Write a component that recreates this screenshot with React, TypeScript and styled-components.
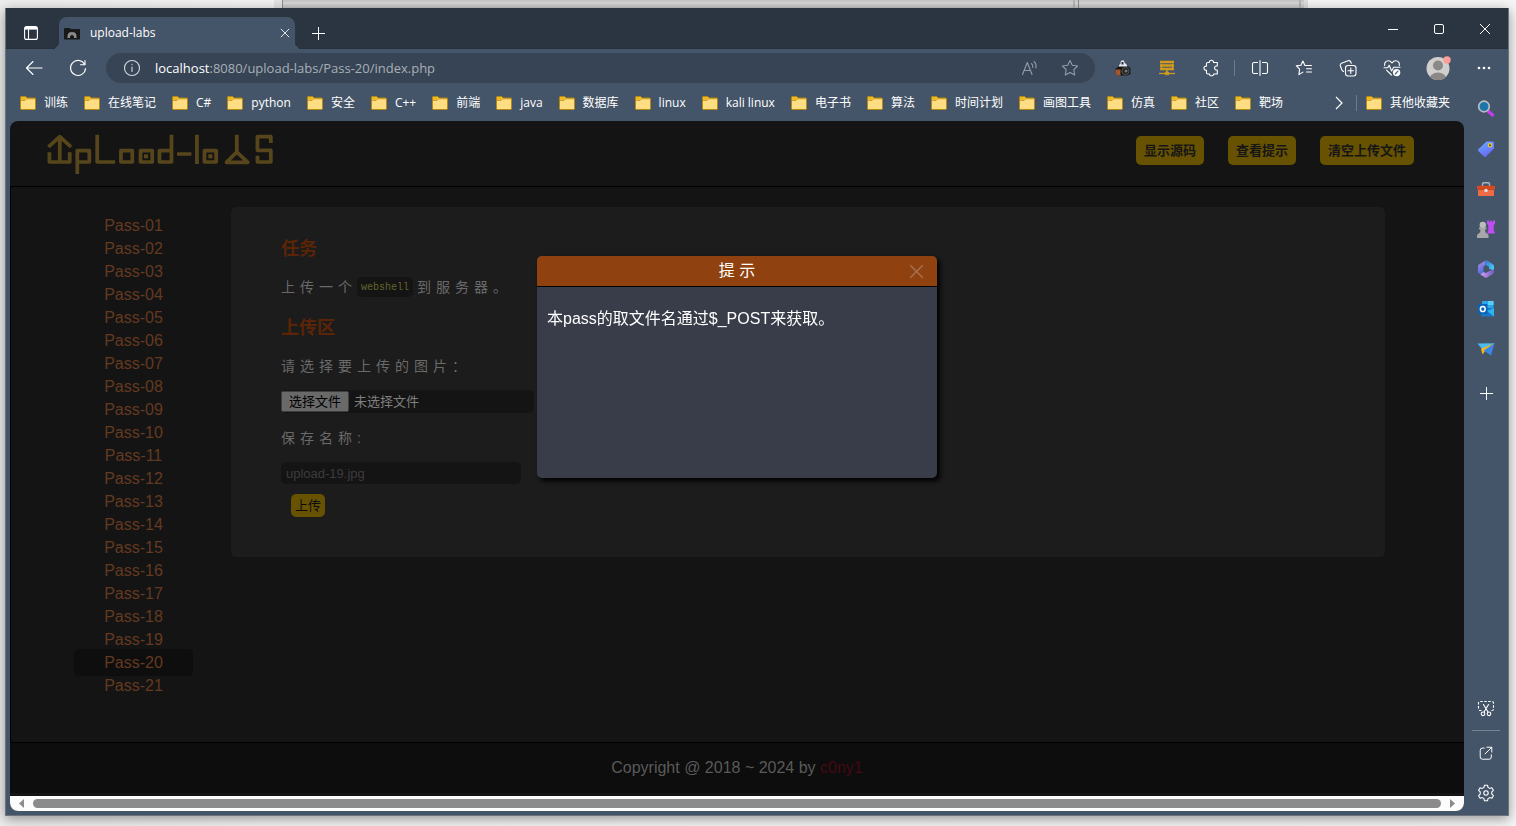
import React from 'react';
import styled, { createGlobalStyle, css } from 'styled-components';

const UI_FONT = '"Open Sans", "Noto Sans CJK SC", sans-serif';
const PAGE_FONT = '"Liberation Sans", "Noto Sans CJK SC", sans-serif';

const GlobalStyle = createGlobalStyle`
  *, *::before, *::after { box-sizing: border-box; }
  body { margin: 0; background: #f1f1f1; }
  button, input { font: inherit; }
  button { border: 0; padding: 0; margin: 0; background: none; color: inherit; cursor: pointer; }
  a { text-decoration: none; color: inherit; }
  ul { list-style: none; margin: 0; padding: 0; }
  svg { display: block; flex: none; }
`;

const Desktop = styled.div`
  min-height: 100vh;
  display: flex;
  flex-direction: column;
  background: linear-gradient(90deg, #ededed, #f4f4f4 280px, #f6f6f6);
`;

const BackWindow = styled.div`
  height: 8px;
  margin: 0 208px 0 274px;
  display: flex;
  background: linear-gradient(#cacaca 2px, #dcdcdc 2px, #c4c4c4);
  border-left: 8px solid #e4e4e4;
  border-right: 4px solid #dedede;
`;

const BackPane = styled.div<{ $grow: number }>`
  flex: ${(p) => p.$grow} 1 0;
  border-left: 1px solid #8c8c8c;
  border-right: 2px solid #b4b4b4;
  margin-right: 3px;
`;

const BrowserWindow = styled.div`
  flex: 1;
  display: flex;
  flex-direction: column;
  margin: 0 7px 10px 5px;
  border: 1px solid #6d737b;
  border-top: 0;
  background: #455569;
  box-shadow: 0 3px 12px rgba(0, 0, 0, 0.4);
  font-family: ${UI_FONT};
  font-size: 12px;
  color: #fff;
`;

const TitleBar = styled.div`
  height: 41px;
  display: flex;
  align-items: flex-end;
  background: #2b3541;
  box-shadow: inset 0 -1px 0 #27303b;
`;

const CaptionButton = styled.button<{ $width: number }>`
  width: ${(p) => p.$width}px;
  height: 32px;
  display: flex;
  align-items: center;
  justify-content: center;
`;

const WindowControls = styled.div`
  margin-left: auto;
  align-self: flex-start;
  display: flex;
  padding-top: 5px;
`;

const Tab = styled.div`
  position: relative;
  width: 236px;
  height: 32px;
  margin-left: 4px;
  padding: 0 5px;
  display: flex;
  align-items: center;
  gap: 10px;
  background: #455569;
  border-radius: 8px 8px 0 0;
  &::before,
  &::after {
    content: '';
    position: absolute;
    bottom: 0;
    width: 7px;
    height: 7px;
  }
  &::before {
    left: -7px;
    background: radial-gradient(circle at 0 0, transparent 7px, #455569 7px);
  }
  &::after {
    right: -7px;
    background: radial-gradient(circle at 100% 0, transparent 7px, #455569 7px);
  }
`;

const TabTitle = styled.span`
  flex: 1;
  line-height: 16px;
`;

const Toolbar = styled.div`
  height: 39px;
  display: flex;
  align-items: center;
  padding: 0 2px 2px 6px;
`;

const toolWidths = { narrow: 40, normal: 44, wide: 48 };

const ToolButton = styled.button<{ $size?: keyof typeof toolWidths }>`
  width: ${(p) => toolWidths[p.$size ?? 'normal']}px;
  height: 32px;
  display: flex;
  flex: none;
  align-items: center;
  justify-content: center;
`;

const AddressBar = styled.div`
  flex: 1;
  height: 30px;
  margin: 0 6px;
  padding: 0 5px 0 17px;
  display: flex;
  align-items: center;
  border-radius: 15px;
  background: #374455;
  color: #a9afb7;
  font-size: 13px;
`;

const Url = styled.span`
  flex: 1;
  padding-left: 14px;
  line-height: 20px;
  b {
    font-weight: 400;
    color: #fff;
  }
`;

const Divider = styled.span`
  width: 1px;
  height: 16px;
  margin: 0 3px 0 1px;
  background: #6f7b8a;
`;

const Lower = styled.div`
  flex: 1;
  display: flex;
`;

const ContentColumn = styled.div`
  flex: 1;
  min-width: 0;
  display: flex;
  flex-direction: column;
  padding: 0 0 4px 4px;
`;

const Bookmarks = styled.nav`
  height: 30px;
  margin-bottom: 3px;
  padding: 0 14px 0 10px;
  display: flex;
  align-items: center;
  gap: 16px;
  white-space: nowrap;
`;

const Bookmark = styled.a`
  display: flex;
  align-items: center;
  gap: 8px;
  line-height: 16px;
`;

const BookmarksEnd = styled.div`
  margin-left: auto;
  display: flex;
  align-items: center;
  gap: 6px;
`;

const Sidebar = styled.aside`
  width: 44px;
  padding: 1px 0 2px;
  display: flex;
  flex-direction: column;
  align-items: center;
`;

const SideButton = styled.button`
  width: 40px;
  height: 40px;
  display: flex;
  align-items: center;
  justify-content: center;
`;

const AddButton = styled(SideButton)`
  margin-top: 4px;
`;

const SideBottom = styled.div`
  margin-top: auto;
  display: flex;
  flex-direction: column;
  align-items: center;
`;

const SideRule = styled.hr`
  width: 28px;
  height: 1px;
  margin: 2px 0;
  border: 0;
  background: #77828f;
`;

const Page = styled.div`
  position: relative;
  flex: 1;
  display: flex;
  flex-direction: column;
  overflow: hidden;
  border-radius: 8px;
  background: #141414;
  font-family: ${PAGE_FONT};
  font-size: 16px;
`;

const PageHeader = styled.header`
  height: 66px;
  display: flex;
  align-items: flex-start;
  padding: 11px 50px 0 36px;
  border-bottom: 1px solid #000;
`;

const HeaderActions = styled.div`
  margin: 4px 0 0 auto;
  display: flex;
  gap: 24px;
`;

const goldButton = css`
  border-radius: 5px;
  background: #665200;
  font-size: 13px;
`;

const HeaderButton = styled.button`
  ${goldButton}
  height: 29px;
  padding: 0 8px 3px;
  color: #161616;
  font-weight: 700;
`;

const PageMain = styled.main`
  flex: 1;
  display: flex;
  align-items: flex-start;
  padding: 20px 79px 40px 0;
  border-left: 1px solid #000;
`;

const PassList = styled.ul`
  width: 220px;
  padding: 7px 0 0 25px;
  text-align: center;
  line-height: 23px;
  color: #643a20;
`;

const PassLink = styled.a<{ $active: boolean }>`
  padding: 5px 30px;
  border-radius: 5px;
  background: ${(p) => (p.$active ? '#0e0e0e' : 'transparent')};
`;

const Panel = styled.section`
  flex: 1;
  padding: 30px 50px 40px;
  border-radius: 5px;
  background: #1c1c1c;
`;

const PanelTitle = styled.h3`
  margin: 0 0 16px;
  font-size: 18px;
  line-height: 24px;
  color: #5c2406;
`;

const PanelText = styled.p`
  margin: 0 0 19px;
  font-size: 14px;
  line-height: 20px;
  letter-spacing: 5px;
  color: #6a6a6a;
`;

const Code = styled.code`
  display: inline-block;
  height: 20px;
  padding: 1px 4px 0;
  margin-right: 4px;
  border-radius: 5px;
  background: #141414;
  color: #66642a;
  font-family: "Liberation Mono", monospace;
  font-size: 10px;
  letter-spacing: 0;
  vertical-align: top;
`;

const FieldLabel = styled.label`
  display: block;
  margin-bottom: 14px;
  font-size: 14px;
  line-height: 20px;
  letter-spacing: 5px;
  color: #6a6a6a;
`;

const FilePicker = styled.label`
  position: relative;
  width: 253px;
  height: 23px;
  margin-bottom: 15px;
  display: flex;
  align-items: center;
  gap: 5px;
  border-radius: 5px;
  background: #141414;
  color: #7f7f7f;
  font-size: 13px;
  line-height: 19px;
  input {
    position: absolute;
    inset: 0;
    opacity: 0;
  }
`;

const FileButton = styled.span`
  padding: 0 7px;
  border: 1px solid #3f3f3f;
  border-radius: 2px;
  background: #696969;
  color: #000;
`;

const TextInput = styled.input`
  display: block;
  width: 240px;
  height: 22px;
  margin-bottom: 10px;
  padding: 0 5px;
  border: 0;
  border-radius: 5px;
  background: #141414;
  color: #7f7f7f;
  font-size: 13px;
  &::placeholder {
    color: #3c3c3c;
    opacity: 1;
  }
`;

const SubmitButton = styled.button`
  ${goldButton}
  height: 23px;
  margin-left: 10px;
  padding: 0 4px;
  display: block;
  line-height: 23px;
  color: #0c0c0c;
`;

const PageFooter = styled.footer`
  height: 54px;
  border-top: 1px solid #000;
  border-bottom: 3px solid #141414;
  background: #0d0d0d;
  text-align: center;
  line-height: 50px;
  color: #5a5a5a;
  a {
    color: #430a12;
  }
`;

const ScrollTrack = styled.div`
  height: 15px;
  padding: 0 8px;
  display: flex;
  align-items: center;
  gap: 8px;
  background: #fcfcfc;
`;

const ScrollThumb = styled.div`
  flex: 1;
  height: 9px;
  border-radius: 5px;
  background: #8b8b8b;
`;

const Dialog = styled.div`
  position: absolute;
  top: 135px;
  left: 50%;
  width: 400px;
  height: 222px;
  margin-left: -200px;
  border-radius: 5px;
  background: #393d49;
  box-shadow: 3px 3px 5px #000;
`;

const DialogHeader = styled.div`
  height: 31px;
  padding: 0 13px;
  display: grid;
  grid-template-columns: 15px 1fr 15px;
  align-items: center;
  border-bottom: 1px solid #000;
  border-radius: 5px 5px 0 0;
  background: #8f420f;
  text-align: center;
`;

const DialogTitle = styled.h2`
  grid-column: 2;
  margin: 0;
  font-size: 16px;
  line-height: 30px;
  font-weight: 400;
`;

const DialogText = styled.p`
  margin: 0;
  padding: 20px 10px;
  line-height: 23px;
`;

type IconProps = { size?: number; color?: string; children: React.ReactNode };
const Icon = ({ size = 18, color = '#fff', children }: IconProps) => (
  <svg width={size} height={size} viewBox="0 0 18 18" fill="none" stroke={color} strokeWidth="1.100" strokeLinecap="round" strokeLinejoin="round" aria-hidden="true">
    {children}
  </svg>
);

const Folder = () => (
  <svg width="16" height="14" viewBox="0 0 16 14" aria-hidden="true">
    <path d="M0.5 1.5Q0.5 0.5 1.5 0.5H5.5L7 2H14.5Q15.5 2 15.5 3V12.5Q15.5 13.5 14.5 13.5H1.5Q0.5 13.5 0.5 12.5Z" fill="#ffdd82" stroke="#b5890f" />
    <path d="M1 1H5.3L6.4 2.2L5 3.7H1Z" fill="#eeb81f" />
    <path d="M1 4.3H5.2L6.8 2.7H15" fill="none" stroke="#c3951c" />
  </svg>
);

const Logo = () => (
  <svg width="230" height="43" viewBox="132 36 669 129" preserveAspectRatio="none" fill="none" stroke="#57451c" strokeWidth="11" strokeLinejoin="round" role="img" aria-label="upload-labs">
    <path d="M142 97V126H201V97M172 50V126M139 81L172 50L205 81" />
    <path d="M223 162V92H258V126H223" />
    <path d="M281 44V126H333" />
    <rect x="350" y="92" width="33" height="34" />
    <rect x="407" y="92" width="34" height="34" />
    <rect x="417" y="103" width="12" height="12" fill="#57451c" stroke="none" />
    <path d="M497 44V126H462V92H497" />
    <path d="M513 102H555" />
    <path d="M571 44V132" />
    <rect x="593" y="92" width="34" height="34" />
    <rect x="604" y="103" width="12" height="12" fill="#57451c" stroke="none" />
    <path d="M687 44V96L657 127H719L687 96" />
    <path d="M786 69V50H747V91H786V126H747V107" />
  </svg>
);

const bookmarks = ['训练', '在线笔记', 'C#', 'python', '安全', 'C++', '前端', 'java', '数据库', 'linux', 'kali linux', '电子书', '算法', '时间计划', '画图工具', '仿真', '社区', '靶场'];
const passes = Array.from({ length: 21 }, (_, i) => `Pass-${String(i + 1).padStart(2, '0')}`);

const toolsBefore = [
  {
    label: '截图',
    icon: (
      <svg width="16" height="16" viewBox="0 0 16 16" aria-hidden="true">
        <path d="M4 7V5L5.500 4V2L6.500 0.500H9L9.500 2.500L12 5V7Z" fill="#e5eaf0" />
        <path d="M6.500 2H8.500V4.500H6.500Z" fill="#26303c" />
        <path d="M0.500 8.500L4 6.500H13.500L15.500 8.500V14L12.500 15.500H3L0.500 14Z" fill="#171717" />
        <path d="M0.500 9.500H5.500V15.500H2.500L0.500 14Z" fill="#a3562f" />
        <circle cx="10.500" cy="11" r="3.600" fill="#222" stroke="#666" strokeWidth="0.800" />
        <circle cx="11" cy="11" r="1.500" fill="#6f7785" />
      </svg>
    ),
  },
  {
    label: '代理',
    icon: (
      <svg width="16" height="16" viewBox="0 0 16 16" fill="none" stroke="#d09a1c" aria-hidden="true">
        <path d="M1 2H15M1 5.500H15M1 9H15" strokeWidth="2.400" />
        <path d="M2.500 3.500V8M13.500 3.500V8M8 10V13" strokeWidth="1.500" />
        <path d="M0 13.500H16" strokeWidth="1.300" />
        <rect x="6.500" y="12.300" width="3" height="2.400" fill="#d09a1c" />
      </svg>
    ),
  },
  {
    label: '扩展',
    icon: (
      <Icon>
        <path d="M5.700 3.500H7.300C7.100 1.900 8.200 1.300 9.400 1.300S11.700 1.900 11.500 3.500H15.300V7C13.500 6.700 12.600 7.800 12.600 9S13.500 11.300 15.300 11V15H11.600C11.800 16.200 10.700 16.800 9.500 16.800S7.400 16.200 7.600 15H5.700Q4.500 15 4.500 13.800V11.200C2.900 11.400 2 10.400 2 9.200S2.900 7 4.500 7.200V4.700Q4.500 3.500 5.700 3.500Z" />
      </Icon>
    ),
  },
];

const toolsAfter = [
  {
    label: '分屏',
    icon: (
      <Icon>
        <path d="M6.500 3.500H3Q1.500 3.500 1.500 5V13Q1.500 14.500 3 14.500H6.500M11.500 3.500H15Q16.500 3.500 16.500 5V13Q16.500 14.500 15 14.500H11.500M9 1.500V16.500" />
      </Icon>
    ),
  },
  {
    label: '收藏夹',
    icon: (
      <Icon>
        <path d="M10.300 6.500H9.900L7.900 2L5.900 6.300L1.300 6.900L4.600 10.100L3.900 15.600L7.900 13.100M10.300 6.500H16.500M11.500 9.800H16.500M11.500 13H16.500" />
      </Icon>
    ),
  },
  {
    label: '集锦',
    icon: (
      <Icon>
        <rect x="6.500" y="6.500" width="10.500" height="10.500" rx="2.500" />
        <path d="M11.800 9V14.500M9 11.800H14.500M4.500 12.500Q3.300 12 2.800 10.800L1.300 6.800Q0.800 5 2.500 4.300L9 1.800Q10.800 1.200 11.700 2.800L12.300 4.300" />
      </Icon>
    ),
  },
  {
    label: '浏览器概要',
    icon: (
      <Icon>
        <path d="M1.700 6.500C1 3.800 3 1.800 5.300 1.800C7.200 1.800 8.300 2.900 9 4C9.700 2.900 10.800 1.800 12.700 1.800C15 1.800 17 3.800 16.300 6.500M1 8.800H4.700L6.200 6.200L8.600 12L10.700 8.200H17M3.500 11.200L8.500 16" />
        <circle cx="13.600" cy="13.600" r="3.700" fill="#fff" stroke="none" />
        <path d="M12.300 15L15 12.200" stroke="#455569" />
      </Icon>
    ),
  },
];

const sideTools = [
  {
    label: '搜索',
    icon: (
      <svg width="18" height="18" viewBox="0 0 18 18" aria-hidden="true">
        <path d="M11.500 11.500L15.500 15" stroke="#c93df2" strokeWidth="3.200" strokeLinecap="round" />
        <circle cx="7" cy="6.500" r="5.300" fill="#1c76ab" stroke="#b9bdc1" strokeWidth="1.700" />
      </svg>
    ),
  },
  {
    label: '购物',
    icon: (
      <svg width="18" height="18" viewBox="0 0 18 18" aria-hidden="true">
        <defs>
          <linearGradient id="tag" x1="0" y1="0" x2="0.500" y2="1"><stop stopColor="#6bb1ff" /><stop offset="1" stopColor="#6867f4" /></linearGradient>
        </defs>
        <path d="M9.500 1.500H15.500Q17 1.500 17 3V8.500L8.800 16.800Q8 17.500 7.200 16.800L1.300 11Q0.500 10 1.300 9.200Z" fill="url(#tag)" />
        <circle cx="13" cy="5.300" r="1.700" fill="#4b4a4c" stroke="#f4cb28" strokeWidth="1.200" />
      </svg>
    ),
  },
  {
    label: '工具',
    icon: (
      <svg width="18" height="18" viewBox="0 0 18 18" aria-hidden="true">
        <path d="M5.500 6V4Q5.500 2.700 6.800 2.700H11.200Q12.500 2.700 12.500 4V6" fill="none" stroke="#a9b4bd" strokeWidth="1.500" />
        <rect x="0" y="5.800" width="18" height="4" rx="0.800" fill="#d8481d" />
        <path d="M1 10H17V15.300Q17 16 16.200 16H1.800Q1 16 1 15.300Z" fill="#f06a42" />
        <circle cx="9" cy="10.500" r="1.800" fill="#d9dde0" />
      </svg>
    ),
  },
  {
    label: '游戏',
    icon: (
      <svg width="18" height="18" viewBox="0 0 18 18" aria-hidden="true">
        <path d="M10 0.500H12V2H13.200V0.500H14.800V2H16V0.500H18V4L16.700 5V10L18 13.500H10L11.300 10V5L10 4Z" fill="#c04cf2" />
        <circle cx="5.800" cy="5" r="3.200" fill="#bcbcbc" />
        <path d="M2 7.500H9.500V9.300H8.200V12L11.500 15V17.500Q11.500 18 11 18H0.500Q0 18 0 17.500V15L3.300 12V9.300H2Z" fill="#a8a8a8" />
      </svg>
    ),
  },
  {
    label: 'Microsoft 365',
    icon: (
      <svg width="18" height="18" viewBox="0 0 18 18" aria-hidden="true">
        <defs>
          <linearGradient id="m1" x1="0" y1="0" x2="0.300" y2="1"><stop stopColor="#b18ae6" /><stop offset="1" stopColor="#4f6fdd" /></linearGradient>
          <linearGradient id="m2" x1="0" y1="0" x2="1" y2="0.800"><stop stopColor="#3a6fd0" /><stop offset="1" stopColor="#45d0f5" /></linearGradient>
          <linearGradient id="m3" x1="0" y1="0.500" x2="1" y2="0.500"><stop stopColor="#d79af0" /><stop offset="1" stopColor="#6b5fc0" /></linearGradient>
        </defs>
        <path d="M8.500 0.500L1.900 4.500Q1 5 1 6V12.500L4.300 14.800L6.500 12V6.500L8.500 5Z" fill="url(#m1)" />
        <path d="M8.500 0.500Q9.500 0.200 10.500 0.800L16.200 4.500Q17 5 17 6V10.500L12 8.800V6.800L8 4.800Z" fill="url(#m2)" />
        <path d="M17 9V12.500Q17 13.300 16.200 13.700L10 17.400Q9 17.900 8 17.400L3.500 14.500L6.500 12L9 13L12 11.300Z" fill="url(#m3)" />
      </svg>
    ),
  },
  {
    label: 'Outlook',
    icon: (
      <svg width="18" height="18" viewBox="0 0 18 18" aria-hidden="true">
        <path d="M5 1H16.500V9H5Z" fill="#29a7e8" />
        <path d="M11 1H16.500V5H11Z" fill="#55d0ff" />
        <path d="M4 8H17V16.500H4Z" fill="#1778c8" />
        <path d="M10 11L17 8V16.500Z" fill="#2db4ee" />
        <rect x="1" y="4" width="9.500" height="10" rx="1" fill="#0764b8" />
        <ellipse cx="5.800" cy="9" rx="2.400" ry="2.600" fill="none" stroke="#fff" strokeWidth="1.500" />
      </svg>
    ),
  },
  {
    label: '拖放',
    icon: (
      <svg width="18" height="18" viewBox="0 0 18 18" aria-hidden="true">
        <path d="M0.500 3.500L17.500 3.300L5 9Z" fill="#49bdf0" />
        <path d="M17.500 3.300L4 8.700L5.500 14.500L8 11Z" fill="#f4b91c" />
        <path d="M17.500 3.300L14 15.500L6.800 10.500Z" fill="#3a86e8" />
      </svg>
    ),
  },
];

const Cross = ({ color = '#fff', size = 12 }: { color?: string; size?: number }) => (
  <svg width={size} height={size} viewBox="0 0 12 12" stroke={color} strokeWidth="1" aria-hidden="true">
    <path d="M1 1L11 11M11 1L1 11" />
  </svg>
);

const Plus = ({ size }: { size: number }) => (
  <svg width={size} height={size} viewBox="0 0 13 13" stroke="#fff" strokeWidth="1" aria-hidden="true">
    <path d="M6.500 0V13M0 6.500H13" />
  </svg>
);

export default function App() {
  return (
    <Desktop>
      <GlobalStyle />
      <BackWindow>
        <BackPane $grow={79} />
        <BackPane $grow={22} />
      </BackWindow>
      <BrowserWindow>
        <TitleBar>
          <CaptionButton $width={49} aria-label="标签页操作">
            <svg width="14" height="14" viewBox="0 0 14 14" fill="none" stroke="#fff" strokeWidth="1.100" aria-hidden="true">
              <rect x="0.600" y="0.600" width="12.800" height="12.800" rx="2" />
              <path d="M1 2.300H13" strokeWidth="2.600" />
              <path d="M4.500 3V13" />
            </svg>
          </CaptionButton>
          <Tab>
            <svg width="16" height="16" viewBox="0 0 16 16" aria-hidden="true">
              <path d="M0 4Q0 3 1 3H5.500L7 4H15Q16 4 16 5V13.500Q16 14.500 15 14.500H1Q0 14.500 0 13.500Z" fill="#191919" />
              <path d="M3.500 13V11Q3.500 7 8 7T12.500 11V13H10V11.500L8 9.500L6 11.500V13Z" fill="#8a8a8a" />
            </svg>
            <TabTitle>upload-labs</TabTitle>
            <CaptionButton $width={10} aria-label="关闭标签页"><Cross size={10} /></CaptionButton>
          </Tab>
          <CaptionButton $width={47} aria-label="新建标签页"><Plus size={13} /></CaptionButton>
          <WindowControls>
            <CaptionButton $width={46} aria-label="最小化">
              <svg width="10" height="10" viewBox="0 0 10 10" stroke="#fff" aria-hidden="true"><path d="M0 5.500H10" /></svg>
            </CaptionButton>
            <CaptionButton $width={46} aria-label="最大化">
              <svg width="10" height="10" viewBox="0 0 10 10" fill="none" stroke="#fff" aria-hidden="true"><rect x="0.500" y="0.500" width="9" height="9" rx="1.500" /></svg>
            </CaptionButton>
            <CaptionButton $width={46} aria-label="关闭"><Cross /></CaptionButton>
          </WindowControls>
        </TitleBar>
        <Toolbar>
          <ToolButton aria-label="返回"><Icon><path d="M1.500 9H17M8 2.500L1.500 9L8 15.500" /></Icon></ToolButton>
          <ToolButton aria-label="刷新"><Icon><path d="M15.700 5.500A7.500 7.500 0 1 0 16.500 9.500M16 1.500V5.700H11.500" /></Icon></ToolButton>
          <AddressBar>
            <Icon color="#d5d9de"><circle cx="9" cy="9" r="7.500" /><path d="M9 8V12.500M9 5.200V5.600" /></Icon>
            <Url><b>localhost</b>:8080/upload-labs/Pass-20/index.php</Url>
            <ToolButton $size="narrow" aria-label="大声朗读">
              <Icon color="#949ca7"><path d="M1.500 15.500L6.300 3.500L11 15.500M3 11.500H9.500M10.500 4.500Q12.200 6 11.800 8.500M13 2.500Q15.800 5 14.800 9" /></Icon>
            </ToolButton>
            <ToolButton $size="narrow" aria-label="收藏">
              <Icon color="#949ca7"><path d="M9 1.500L11.300 6.300L16.600 7L12.800 10.700L13.700 16L9 13.500L4.300 16L5.200 10.700L1.400 7L6.700 6.300Z" /></Icon>
            </ToolButton>
          </AddressBar>
          {toolsBefore.map((t) => <ToolButton key={t.label} aria-label={t.label}>{t.icon}</ToolButton>)}
          <Divider />
          {toolsAfter.map((t) => <ToolButton key={t.label} aria-label={t.label}>{t.icon}</ToolButton>)}
          <ToolButton $size="wide" aria-label="个人资料">
            <svg width="26" height="26" viewBox="0 0 26 26" aria-hidden="true">
              <clipPath id="face"><circle cx="13" cy="13.500" r="11.500" /></clipPath>
              <circle cx="13" cy="13.500" r="11.500" fill="#d0cfcd" />
              <g clipPath="url(#face)" fill="#8b8885"><circle cx="13" cy="10.500" r="5" /><ellipse cx="13" cy="24" rx="8.500" ry="6.500" /></g>
              <circle cx="22" cy="5" r="3.700" fill="#ff9d98" />
            </svg>
          </ToolButton>
          <ToolButton aria-label="设置及其他">
            <svg width="14" height="4" viewBox="0 0 14 4" fill="#fff" aria-hidden="true"><circle cx="2" cy="2" r="1.300" /><circle cx="7" cy="2" r="1.300" /><circle cx="12" cy="2" r="1.300" /></svg>
          </ToolButton>
        </Toolbar>
        <Lower>
          <ContentColumn>
            <Bookmarks>
              {bookmarks.map((b) => <Bookmark key={b} href="#"><Folder />{b}</Bookmark>)}
              <BookmarksEnd>
                <button aria-label="更多收藏">
                  <svg width="16" height="14" viewBox="0 0 16 14" fill="none" stroke="#fff" strokeWidth="1.200" aria-hidden="true"><path d="M3 1L9 7L3 13" /></svg>
                </button>
                <Divider />
                <Bookmark href="#"><Folder />其他收藏夹</Bookmark>
              </BookmarksEnd>
            </Bookmarks>
            <Page>
              <PageHeader>
                <Logo />
                <HeaderActions>
                  <HeaderButton>显示源码</HeaderButton>
                  <HeaderButton>查看提示</HeaderButton>
                  <HeaderButton>清空上传文件</HeaderButton>
                </HeaderActions>
              </PageHeader>
              <PageMain>
                <PassList>
                  {passes.map((p) => <li key={p}><PassLink href="#" $active={p === 'Pass-20'}>{p}</PassLink></li>)}
                </PassList>
                <Panel>
                  <PanelTitle>任务</PanelTitle>
                  <PanelText>上传一个<Code>webshell</Code>到服务器。</PanelText>
                  <PanelTitle>上传区</PanelTitle>
                  <FieldLabel htmlFor="file">请选择要上传的图片：</FieldLabel>
                  <FilePicker>
                    <input id="file" type="file" />
                    <FileButton>选择文件</FileButton>未选择文件
                  </FilePicker>
                  <FieldLabel htmlFor="name">保存名称:</FieldLabel>
                  <TextInput id="name" type="text" placeholder="upload-19.jpg" />
                  <SubmitButton>上传</SubmitButton>
                </Panel>
              </PageMain>
              <PageFooter>Copyright @ 2018 ~ 2024 by <a href="#">c0ny1</a></PageFooter>
              <ScrollTrack>
                <svg width="7" height="9" viewBox="0 0 7 9" fill="#8b8b8b" aria-hidden="true"><path d="M6 0V9L1 4.500Z" /></svg>
                <ScrollThumb />
                <svg width="7" height="9" viewBox="0 0 7 9" fill="#8b8b8b" aria-hidden="true"><path d="M1 0V9L6 4.500Z" /></svg>
              </ScrollTrack>
              <Dialog role="dialog" aria-label="提示">
                <DialogHeader>
                  <DialogTitle>提 示</DialogTitle>
                  <button aria-label="关闭提示"><Cross color="#a5755a" size={15} /></button>
                </DialogHeader>
                <DialogText>本pass的取文件名通过$_POST来获取。</DialogText>
              </Dialog>
            </Page>
          </ContentColumn>
          <Sidebar>
            {sideTools.map((t) => <SideButton key={t.label} aria-label={t.label}>{t.icon}</SideButton>)}
            <AddButton aria-label="自定义"><Plus size={13} /></AddButton>
            <SideBottom>
              <SideButton aria-label="网页捕获">
                <Icon><path d="M4.500 11.500H3Q1.500 11.500 1.500 10V4Q1.500 2.500 3 2.500H15Q16.500 2.500 16.500 4V10Q16.500 11.500 15 11.500H13.500" strokeDasharray="2.500 1.500" strokeLinecap="butt" /><path d="M6.500 5.500L11 13M11.500 5.500L7 13" /><circle cx="6" cy="14.800" r="1.800" /><circle cx="12" cy="14.800" r="1.800" /></Icon>
              </SideButton>
              <SideRule />
              <SideButton aria-label="在新窗口打开">
                <Icon size={16}><path d="M7 3.500H5Q2.500 3.500 2.500 6V13.500Q2.500 16 5 16H12.500Q15 16 15 13.500V11M10 2.500H15.500V8M15.500 2.500L8 10" /></Icon>
              </SideButton>
              <SideButton aria-label="设置">
                <Icon><path d="M7.500 1.200H10.500L11 3.400L12.700 4.400L14.900 3.700L16.400 6.300L14.800 7.900V10.100L16.400 11.700L14.900 14.300L12.700 13.600L11 14.600L10.500 16.800H7.500L7 14.600L5.300 13.600L3.100 14.300L1.600 11.700L3.200 10.100V7.900L1.600 6.300L3.100 3.700L5.300 4.400L7 3.400Z" /><circle cx="9" cy="9" r="2.200" /></Icon>
              </SideButton>
            </SideBottom>
          </Sidebar>
        </Lower>
      </BrowserWindow>
    </Desktop>
  );
}
